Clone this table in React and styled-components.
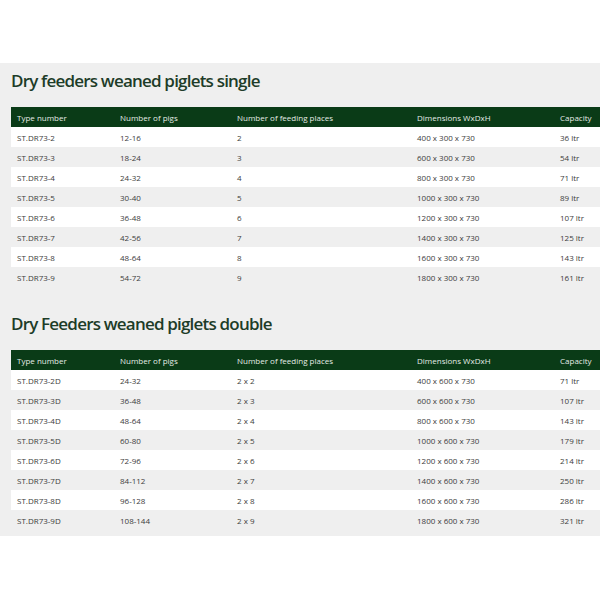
import React from 'react';
import styled, { createGlobalStyle } from 'styled-components';

const GlobalStyle = createGlobalStyle`
  html, body {
    margin: 0;
    padding: 0;
    background: #ffffff;
    font-family: "Open Sans", "Liberation Sans", sans-serif;
  }
`;

const Page = styled.div`
  width: 600px;
  height: 600px;
  padding-top: 63px;
  box-sizing: border-box;
  overflow: hidden;
`;

const Panel = styled.section`
  background: #efefef;
  padding: 6px 0 6px 11px;
`;

const Title = styled.h2`
  margin: ${(p) => (p.$first ? '0' : '25px')} 0 14px 0;
  font-size: 17px;
  line-height: 24px;
  font-weight: 600;
  color: #1d3c28;
  letter-spacing: -0.8px;
`;

const Table = styled.div`
  width: 620px;
`;

const Row = styled.div`
  display: grid;
  grid-template-columns: 103px 117px 180px 143px 1fr;
  height: 20px;
  align-items: center;
  background: ${(p) => (p.$head ? '#0a3b17' : p.$alt ? '#efefef' : '#ffffff')};
  color: ${(p) => (p.$head ? '#e4ece6' : '#3c3c3c')};
`;

const Cell = styled.div`
  padding-left: 6px;
  font-size: 8px;
  white-space: nowrap;
`;

const columns = ['Type number', 'Number of pigs', 'Number of feeding places', 'Dimensions WxDxH', 'Capacity'];

const single = [
  ['ST.DR73-2', '12-16', '2', '400 x 300 x 730', '36 ltr'],
  ['ST.DR73-3', '18-24', '3', '600 x 300 x 730', '54 ltr'],
  ['ST.DR73-4', '24-32', '4', '800 x 300 x 730', '71 ltr'],
  ['ST.DR73-5', '30-40', '5', '1000 x 300 x 730', '89 ltr'],
  ['ST.DR73-6', '36-48', '6', '1200 x 300 x 730', '107 ltr'],
  ['ST.DR73-7', '42-56', '7', '1400 x 300 x 730', '125 ltr'],
  ['ST.DR73-8', '48-64', '8', '1600 x 300 x 730', '143 ltr'],
  ['ST.DR73-9', '54-72', '9', '1800 x 300 x 730', '161 ltr'],
];

const double = [
  ['ST.DR73-2D', '24-32', '2 x 2', '400 x 600 x 730', '71 ltr'],
  ['ST.DR73-3D', '36-48', '2 x 3', '600 x 600 x 730', '107 ltr'],
  ['ST.DR73-4D', '48-64', '2 x 4', '800 x 600 x 730', '143 ltr'],
  ['ST.DR73-5D', '60-80', '2 x 5', '1000 x 600 x 730', '179 ltr'],
  ['ST.DR73-6D', '72-96', '2 x 6', '1200 x 600 x 730', '214 ltr'],
  ['ST.DR73-7D', '84-112', '2 x 7', '1400 x 600 x 730', '250 ltr'],
  ['ST.DR73-8D', '96-128', '2 x 8', '1600 x 600 x 730', '286 ltr'],
  ['ST.DR73-9D', '108-144', '2 x 9', '1800 x 600 x 730', '321 ltr'],
];

const FeederTable = ({ rows }) => (
  <Table>
    <Row $head>
      {columns.map((c) => <Cell key={c}>{c}</Cell>)}
    </Row>
    {rows.map((r, i) => (
      <Row key={r[0]} $alt={i % 2 === 1}>
        {r.map((v, j) => <Cell key={j}>{v}</Cell>)}
      </Row>
    ))}
  </Table>
);

const App = () => (
  <Page>
    <GlobalStyle />
    <Panel>
      <Title $first>Dry feeders weaned piglets single</Title>
      <FeederTable rows={single} />
      <Title>Dry Feeders weaned piglets double</Title>
      <FeederTable rows={double} />
    </Panel>
  </Page>
);

export default App;
